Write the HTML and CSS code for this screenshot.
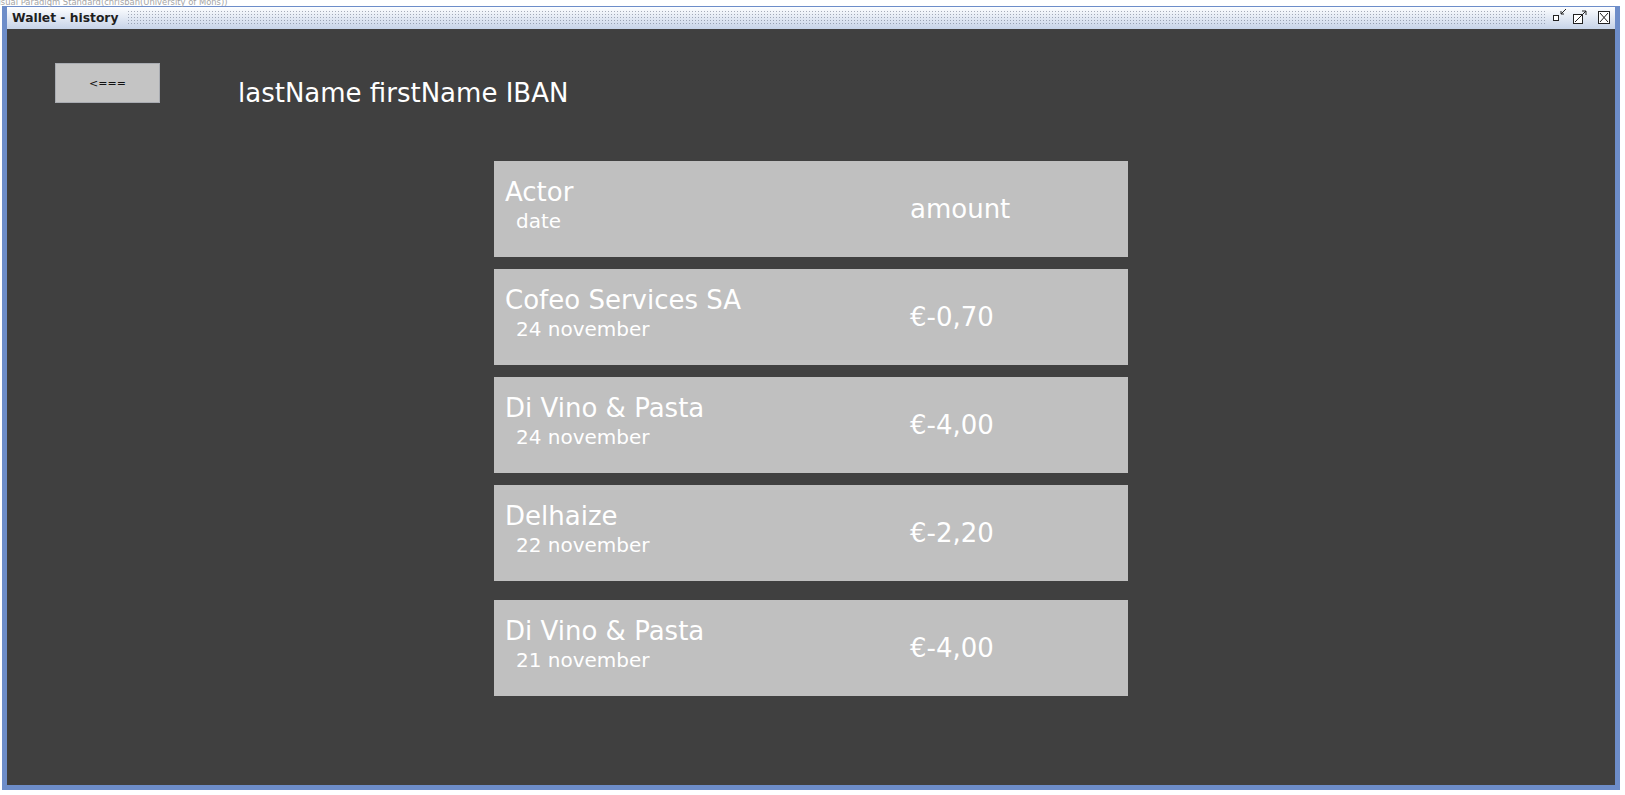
FILE: index.html
```html
<!DOCTYPE html>
<html>
<head>
<meta charset="utf-8">
<title>Wallet - history</title>
<link rel="stylesheet" href="styles.css">
</head>
<body>
<div class="watermark">Visual Paradigm Standard(chrisban(University of Mons))</div>
<div class="window">
  <div class="titlebar">
    <span class="title">Wallet - history</span>
    <span class="dots"></span>
    <svg class="winicons" width="62" height="22" viewBox="0 0 62 22">
      <rect x="1.5" y="8.5" width="5" height="5" fill="#fff" stroke="#222" stroke-width="1"/>
      <path d="M14 2 L9 7 M9 7 L9 4 M9 7 L12 7" stroke="#222" stroke-width="1" fill="none"/>
      <rect x="21.5" y="7.5" width="9" height="9" fill="#fff" stroke="#222" stroke-width="1"/>
      <path d="M23 15 L34 4 M34 4 L30 4 M34 4 L34 8" stroke="#222" stroke-width="1" fill="none"/>
      <rect x="46.5" y="4.5" width="11" height="12" fill="#fff" stroke="#222" stroke-width="1"/>
      <path d="M48 6 L56 15 M56 6 L48 15" stroke="#222" stroke-width="1" fill="none"/>
    </svg>
  </div>
  <div class="content">
    <div class="top">
      <button class="back">&lt;===</button>
      <div class="owner">lastName firstName IBAN</div>
    </div>
    <div class="list">
      <div class="row">
        <div class="who"><div class="actor">Actor</div><div class="date">date</div></div>
        <div class="amount">amount</div>
      </div>
      <div class="row">
        <div class="who"><div class="actor">Cofeo Services SA</div><div class="date">24 november</div></div>
        <div class="amount">€-0,70</div>
      </div>
      <div class="row">
        <div class="who"><div class="actor">Di Vino &amp; Pasta</div><div class="date">24 november</div></div>
        <div class="amount">€-4,00</div>
      </div>
      <div class="row">
        <div class="who"><div class="actor">Delhaize</div><div class="date">22 november</div></div>
        <div class="amount">€-2,20</div>
      </div>
      <div class="row late">
        <div class="who"><div class="actor">Di Vino &amp; Pasta</div><div class="date">21 november</div></div>
        <div class="amount">€-4,00</div>
      </div>
    </div>
  </div>
</div>
</body>
</html>
```

FILE: styles.css
```css
html, body {
  margin: 0;
  padding: 0;
  background: #ffffff;
  overflow: hidden;
  height: 795px;
  font-family: "DejaVu Sans", sans-serif;
}

.watermark {
  position: absolute;
  top: -3px;
  left: -7px;
  font-size: 8.4px;
  line-height: 11px;
  color: #a4a4a4;
  white-space: nowrap;
  z-index: 2;
}

.window {
  margin: 6px 0 0 2px;
  width: 1618px;
  box-sizing: border-box;
  border: 5px solid #6d8dc9;
  border-top: 1px solid #6d8dc9;
}

.titlebar {
  height: 22px;
  display: flex;
  align-items: center;
  background: linear-gradient(#fdfeff, #c6d3e8);
}

.title {
  padding-left: 5px;
  font-weight: bold;
  font-size: 12.3px;
  line-height: 22px;
  color: #1e1e1e;
  white-space: nowrap;
}

.dots {
  flex: 1;
  align-self: stretch;
  margin: 3px 6px 3px 9px;
  background-image: radial-gradient(circle, rgba(90, 100, 120, 0.5) 0.7px, transparent 0.9px);
  background-size: 3px 3px;
}

.winicons {
  display: block;
  margin-right: 1px;
}

.content {
  height: 756px;
  background: #404040;
}

.top {
  display: flex;
  align-items: flex-start;
  height: 132px;
  box-sizing: border-box;
  padding: 34px 0 0 48px;
}

.back {
  width: 105px;
  height: 40px;
  margin: 0;
  padding: 0;
  background: #c4c4c4;
  border: 1px solid #a9acb2;
  font-family: "DejaVu Sans", sans-serif;
  font-size: 11px;
  color: #111111;
}

.owner {
  margin-left: 78px;
  margin-top: 15px;
  font-size: 26px;
  line-height: 30px;
  color: #ffffff;
  white-space: nowrap;
}

.list {
  margin-left: 487px;
  width: 634px;
  display: flex;
  flex-direction: column;
  gap: 12px;
}

.row {
  height: 96px;
  background: #c0c0c0;
  display: flex;
  color: #ffffff;
}

.row.late {
  margin-top: 7px;
}

.who {
  width: 405px;
  padding: 16px 0 0 11px;
}

.actor {
  font-size: 26px;
  line-height: 30px;
  white-space: nowrap;
}

.date {
  font-size: 20px;
  line-height: 28px;
  padding-left: 11px;
  white-space: nowrap;
}

.amount {
  align-self: center;
  font-size: 26px;
  line-height: 30px;
  white-space: nowrap;
}
```
